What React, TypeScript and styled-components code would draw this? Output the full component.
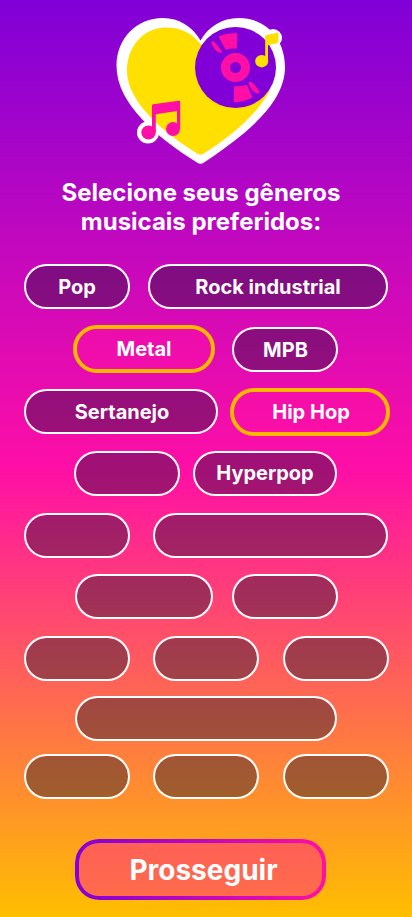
import React from "react";
import styled, { createGlobalStyle } from "styled-components";

const GlobalStyle = createGlobalStyle`
  *, *::before, *::after { box-sizing: border-box; }
  body { margin: 0; font-family: Inter, "Liberation Sans", sans-serif; }
`;

const Screen = styled.main`
  display: flex;
  flex-direction: column;
  width: 412px;
  height: 917px;
  padding-top: 14px;
  overflow: hidden;
  color: #fff;
  background: linear-gradient(180deg, #8000d7 0%, #ff0fa6 51.2%, #ffbf00 100%);
`;

const Logo = styled.svg`
  display: block;
  flex: none;
  width: 180px;
  height: 154px;
  margin-left: 111px;
`;

const Title = styled.h1`
  margin: 10px 0 0;
  padding-right: 10px;
  font-size: 24px;
  line-height: 29px;
  font-weight: 700;
  text-align: center;
`;

const Genres = styled.section`
  display: flex;
  flex-direction: column;
  margin-top: 20px;
`;

const Row = styled.div<{ $height: number; $start: number }>`
  display: flex;
  align-items: center;
  height: ${(p) => p.$height}px;
  padding-left: ${(p) => p.$start}px;
`;

const Pill = styled.button<{ $width: number; $gap?: number; $selected?: boolean; $shift?: number; $drop?: number }>`
  flex: none;
  width: ${(p) => p.$width}px;
  height: ${(p) => (p.$selected ? 48 : 45)}px;
  margin: 0 0 0 ${(p) => p.$gap ?? 0}px;
  padding: ${(p) => p.$drop ?? 0}px 0 0 ${(p) => p.$shift ?? 0}px;
  border: ${(p) => (p.$selected ? "4px solid #ffb800" : "2px solid #fff")};
  border-radius: 24px;
  background: ${(p) => (p.$selected ? "rgba(255, 15, 166, 0.5)" : "rgba(20, 20, 46, 0.4)")};
  background-clip: padding-box;
  color: #fff;
  font: 700 20px/24px Inter, "Liberation Sans", sans-serif;
  white-space: nowrap;
`;

const Continue = styled.button`
  flex: none;
  align-self: flex-start;
  width: 251px;
  height: 61px;
  margin: 34px 0 0 75px;
  padding: 0 0 0 6px;
  position: relative;
  border: 0;
  border-radius: 24px;
  background: rgba(255, 25, 150, 0.48);
  color: #fff;
  font: 700 28px/34px Inter, "Liberation Sans", sans-serif;

  &::before {
    content: "";
    position: absolute;
    inset: 0;
    padding: 4px;
    border-radius: inherit;
    background: linear-gradient(90deg, #8000d7, #ff0fa6);
    mask: linear-gradient(#000 0 0) content-box exclude, linear-gradient(#000 0 0);
  }
`;

type Genre = { width: number; gap?: number; label?: string; selected?: boolean; shift?: number; drop?: number };

const rows: { height: number; start: number; items: Genre[] }[] = [
  { height: 61, start: 24, items: [{ width: 106, label: "Pop" }, { width: 240, gap: 18, label: "Rock industrial" }] },
  { height: 64, start: 73, items: [{ width: 142, label: "Metal", selected: true }, { width: 106, gap: 17, label: "MPB", shift: 1, drop: 2 }] },
  { height: 61, start: 24, items: [{ width: 194, label: "Sertanejo", shift: 2 }, { width: 160, gap: 12, label: "Hip Hop", selected: true, shift: 2 }] },
  { height: 62, start: 74, items: [{ width: 106 }, { width: 144, gap: 13, label: "Hyperpop" }] },
  { height: 62, start: 24, items: [{ width: 106 }, { width: 235, gap: 23 }] },
  { height: 61, start: 75, items: [{ width: 138 }, { width: 106, gap: 19 }] },
  { height: 62, start: 24, items: [{ width: 106 }, { width: 106, gap: 23 }, { width: 106, gap: 24 }] },
  { height: 58, start: 75, items: [{ width: 262 }] },
  { height: 58, start: 24, items: [{ width: 106 }, { width: 106, gap: 23 }, { width: 106, gap: 24 }] },
];

function HeartLogo() {
  return (
    <Logo viewBox="111 14 180 154" aria-hidden="true">
      <path
        d="M200.5 40.5C193 27 179 18 163 18C137 18 116.5 38 116.5 66C116.5 104 158 138 197 162.5Q200.5 165 204 162.5C247 134 285 103 285 67C285 38 265 18 239 18C222 18 208 27 200.5 40.5Z"
        fill="#fff"
      />
      <circle cx="148" cy="132.5" r="11" fill="#fff" />
      <circle cx="273" cy="38" r="9" fill="#fff" />
      <path
        d="M200.5 44C192 33 181 27.5 166 27.5C143 27.5 127 47 127 71C127 101 162 132 198 154Q200.5 155.5 203 154C229 138 259 113 270 90Z"
        fill="#ffe000"
      />
      <circle cx="235.5" cy="67.5" r="40.5" fill="#8000d7" />
      <circle cx="235.5" cy="67.5" r="10" fill="none" stroke="#ff0fa6" strokeWidth="9" />
      <g fill="#ff0fa6" stroke="#ff0fa6" strokeLinejoin="round" strokeWidth="1.5">
        <path d="M219.5 37Q227 33.5 236.5 34L236 48Q230 47.5 226 49Z" />
        <path d="M212.5 42Q214 42 217 46L221.5 52Q217.5 52 215 48Q211 43 212.5 42Z" />
        <path d="M234.8 87Q241 87.5 246.5 85.8L251.5 97Q244 101 234.5 101.5Z" />
        <path d="M249.5 82.5Q252 82.5 255 86.5L259 92Q257 94 253.5 90.5Q248.5 84 249.5 82.5Z" />
      </g>
      <ellipse cx="261.7" cy="61.2" rx="6.5" ry="6.2" fill="#ffe000" />
      <path d="M265.2 36Q265.2 35.3 266.5 35.1L277.2 32.8Q278.5 32.5 278.5 34V41Q278.5 43 276.5 43.3L268 45.3V62H265.2V36Z" fill="#ffe000" />
      <ellipse cx="148.5" cy="132.5" rx="7.2" ry="7" fill="#ff0fa6" />
      <ellipse cx="173" cy="129" rx="7" ry="7" fill="#ff0fa6" />
      <path d="M152 105.5Q152 104.5 153 104.3L179 100.7Q180.2 100.5 180.2 101.8V129H177V111L155.8 114.3V132.5H152Z" fill="#ff0fa6" />
    </Logo>
  );
}

export default function App() {
  return (
    <>
      <GlobalStyle />
      <Screen>
        <HeartLogo />
        <Title>
          Selecione seus gêneros
          <br />
          musicais preferidos:
        </Title>
        <Genres>
          {rows.map((row, r) => (
            <Row key={r} $height={row.height} $start={row.start}>
              {row.items.map((g, i) => (
                <Pill key={i} $width={g.width} $gap={g.gap} $selected={g.selected} $shift={g.shift} $drop={g.drop}>
                  {g.label}
                </Pill>
              ))}
            </Row>
          ))}
        </Genres>
        <Continue>Prosseguir</Continue>
      </Screen>
    </>
  );
}
